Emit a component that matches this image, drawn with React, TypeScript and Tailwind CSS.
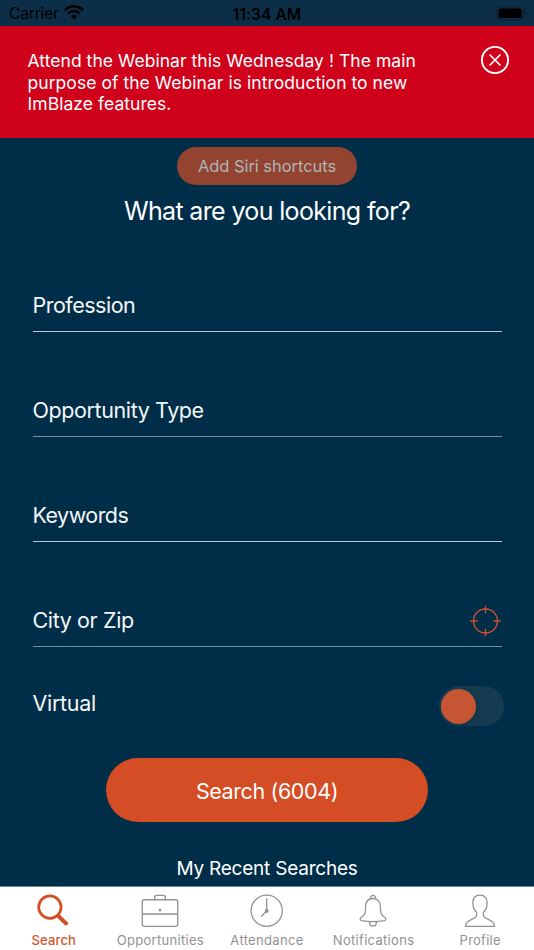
import React from "react";

const fields = [
  { label: "Profession", spacing: "tracking-[-0.5px]", line: "bg-[#bccad2]" },
  { label: "Opportunity Type", spacing: "tracking-[-0.4px]", line: "bg-[#7a8f9c]" },
  { label: "Keywords", spacing: "tracking-[-0.55px]", line: "bg-[#bccad2]" },
  { label: "City or Zip", spacing: "tracking-[-0.38px]", line: "bg-[#7a8f9c]" },
];

function Wifi() {
  return (
    <svg className="ml-[5px] mt-[5px] h-[15px] w-[20px]" viewBox="0 0 20 15" fill="none" stroke="#000">
      <path d="M1 5.2C6-.1 14-.1 19 5.2" strokeWidth="2.5" />
      <path d="M4.2 8.5c3.3-3.3 8.3-3.3 11.6 0" strokeWidth="2.4" />
      <path d="M10 14.5 6.8 11.3c1.800-1.600 4.600-1.600 6.400 0Z" fill="#000" stroke="none" />
    </svg>
  );
}

function Battery() {
  return (
    <svg className="h-[15px] w-[33px]" viewBox="0 0 33 15">
      <rect x="1.2" y=".7" width="27.6" height="13.2" rx="4" fill="none" stroke="#082337" strokeWidth="1.2" />
      <rect x="3.2" y="2.6" width="23.5" height="9.5" rx="2.2" fill="#000" />
      <path d="M30.500 5v4.600c2-.9 2-3.700 0-4.600Z" fill="#082337" />
    </svg>
  );
}

function Target() {
  return (
    <svg className="mr-[1px] mt-[3px] h-[32px] w-[32px]" viewBox="0 0 32 32" fill="none" stroke="#cf5030" strokeWidth="1.3">
      <circle cx="16.5" cy="16" r="12" />
      <path d="M16.500 .7v7.500M16.500 23.800v7.500M1.200 16h7.500M24.300 16h7.500" />
    </svg>
  );
}

function SearchIcon() {
  return (
    <svg className="h-[36px] w-[40px]" viewBox="0 0 40 36" fill="none" stroke="#d44d24">
      <circle cx="16.9" cy="14.1" r="11.2" strokeWidth="2.7" />
      <path d="m24.500 22.100 9.700 9.500" strokeWidth="4" />
    </svg>
  );
}

function Briefcase() {
  return (
    <svg className="h-[36px] w-[40px]" viewBox="0 0 40 36" fill="none" stroke="#929292" strokeWidth="1.35">
      <rect x="2.3" y="6.7" width="35.4" height="26.6" rx="2" />
      <path d="M14.700 6.700V4.300q0-1.900 1.900-1.900h6.800q1.900 0 1.900 1.900v2.400M2.300 21h35.400" />
      <circle cx="20" cy="17.2" r="1.4" fill="#929292" stroke="none" />
    </svg>
  );
}

function Clock() {
  return (
    <svg className="h-[36px] w-[40px]" viewBox="-.7 0 40 36" fill="none" stroke="#929292" strokeWidth="1.3">
      <circle cx="20" cy="17.8" r="15.6" />
      <path d="M20 5.200V18l-5.500 5.500" />
      <circle cx="20" cy="18" r="2" fill="#929292" stroke="none" />
    </svg>
  );
}

function Bell() {
  return (
    <svg className="h-[36px] w-[40px]" viewBox="0 0 40 36" fill="none" stroke="#929292" strokeWidth="1.3">
      <path d="M17.600 5.500a2.500 2.500 0 1 1 4.800 0" />
      <path d="M20 5.500c-5 0-7.400 3.500-7.400 8.300 0 6.800-.9 8.300-4.400 10.700-1.500 1.100-1.500 2.700.4 3.100 7 1.300 15.800 1.300 22.800 0 1.900-.4 1.900-2 .4-3.100-3.500-2.400-4.400-3.900-4.400-10.700 0-4.800-2.400-8.300-7.400-8.300Z" />
      <path d="M16.700 28.600v1.100a3.300 3.300 0 0 0 6.600 0v-1.100" />
    </svg>
  );
}

function Person() {
  return (
    <svg className="h-[36px] w-[40px]" viewBox="0 0 40 36" fill="none" stroke="#929292" strokeWidth="1.3" strokeLinejoin="round">
      <path d="M20 2.200c-4.800 0-7.100 2.900-7.100 7.300 0 5 .9 7.700 3.700 9.700v3c0 4.600-11.200 3.500-11.200 11.200h29.200c0-7.700-11.200-6.600-11.200-11.200v-3c2.800-2 3.700-4.700 3.700-9.700 0-4.400-2.300-7.300-7.100-7.300Z" />
    </svg>
  );
}

const tabs = [
  { label: "Search", Icon: SearchIcon, style: "text-[#d4552e] font-medium tracking-[0.15px]" },
  { label: "Opportunities", Icon: Briefcase, style: "text-[#929292] tracking-[0.3px]" },
  { label: "Attendance", Icon: Clock, style: "text-[#929292] tracking-[0.33px]" },
  { label: "Notifications", Icon: Bell, style: "text-[#929292] tracking-[0.3px]" },
  { label: "Profile", Icon: Person, style: "text-[#929292] tracking-[0.25px]" },
];

export default function App() {
  return (
    <div className="flex h-[950px] w-[534px] flex-col overflow-hidden bg-[#002e48] font-['Inter',sans-serif] text-white">
      <header className="grid h-[26px] shrink-0 grid-cols-3 bg-[#0d2e47] text-black">
        <div className="flex pl-[9px]">
          <span className="pt-[1px] text-[15.5px] leading-[26px] tracking-[-0.15px]">Carrier</span>
          <Wifi />
        </div>
        <div className="pt-[1px] text-center text-[15.5px] font-semibold leading-[27px] tracking-[0.1px] whitespace-nowrap">11:34 AM</div>
        <div className="flex justify-end pr-[6px] pt-[6px]"><Battery /></div>
      </header>

      <section className="flex h-[111.5px] shrink-0 justify-between bg-[#d0021b] pl-[27.5px] pr-[24px] pt-[24px]">
        <p className="text-[17.5px] leading-[21.7px] tracking-[0.05px] whitespace-nowrap">
          Attend the Webinar this Wednesday ! The main<br />
          purpose of the Webinar is introduction to new<br />
          ImBlaze features.
        </p>
        <button className="-mt-[5px] h-[30px] w-[30px]" aria-label="Close">
          <svg viewBox="0 0 30 30" fill="none" stroke="white" strokeLinecap="round">
            <circle cx="15" cy="15" r="13.1" strokeWidth="1.9" />
            <path d="m10 10 10 10m0-10L10 20" strokeWidth="1.7" />
          </svg>
        </button>
      </section>

      <main className="flex min-h-0 flex-1 flex-col">
        <button className="mt-[9.2px] h-[38.3px] w-[180px] shrink-0 self-center rounded-full bg-[#934431] pt-[1.5px] text-[16.5px] tracking-[-0.05px] text-[#aeb5b8]">Add Siri shortcuts</button>
        <h1 className="mt-[8px] h-[34px] shrink-0 text-center text-[25px] leading-[36px] tracking-[-0.65px]">What are you looking for?</h1>
        <form className="flex shrink-0 flex-col px-[32px]">
          {fields.map(({ label, spacing, line }) => (
            <div key={label} className="flex h-[105px] flex-col justify-end">
              <div className="flex h-[52px] items-center justify-between">
                <label className={`pl-[0.5px] text-[21.5px] text-[#f4f6f7] ${spacing}`}>{label}</label>
                {label === "City or Zip" && <Target />}
              </div>
              <div className={`ml-[0.5px] h-[1px] w-[469px] shrink-0 ${line}`} />
            </div>
          ))}
        </form>
        <div className="flex h-[111px] shrink-0 items-start justify-between pl-[32.5px] pr-[30px]">
          <span className="pt-[40px] text-[21.5px] leading-[32px] tracking-[-0.3px] text-[#f4f6f7]">Virtual</span>
          <div className="mt-[39.5px] flex h-[40px] w-[65.5px] items-center rounded-full bg-[#153b51] pl-[2.5px]">
            <div className="h-[35px] w-[35px] rounded-full bg-[#c65633] shadow-[2px_1px_3px_#12364b]" />
          </div>
        </div>
        <button className="h-[64.5px] w-[322px] shrink-0 self-center rounded-full bg-[#d44d24] pt-[1px] text-[21.5px] tracking-[-0.4px]">Search (6004)</button>
        <div className="mt-[30.5px] shrink-0 text-center text-[19px] leading-[32px] tracking-[-0.22px]">My Recent Searches</div>
      </main>

      <nav className="grid h-[64px] shrink-0 grid-cols-5 border-t border-[#718594] bg-white pr-[1px]">
        {tabs.map(({ label, Icon, style }) => (
          <div key={label} className="flex flex-col items-center pt-[6px]">
            <Icon />
            <span className={`mt-[2px] pl-[1px] text-[13px] leading-[18px] whitespace-nowrap ${style}`}>{label}</span>
          </div>
        ))}
      </nav>
    </div>
  );
}
